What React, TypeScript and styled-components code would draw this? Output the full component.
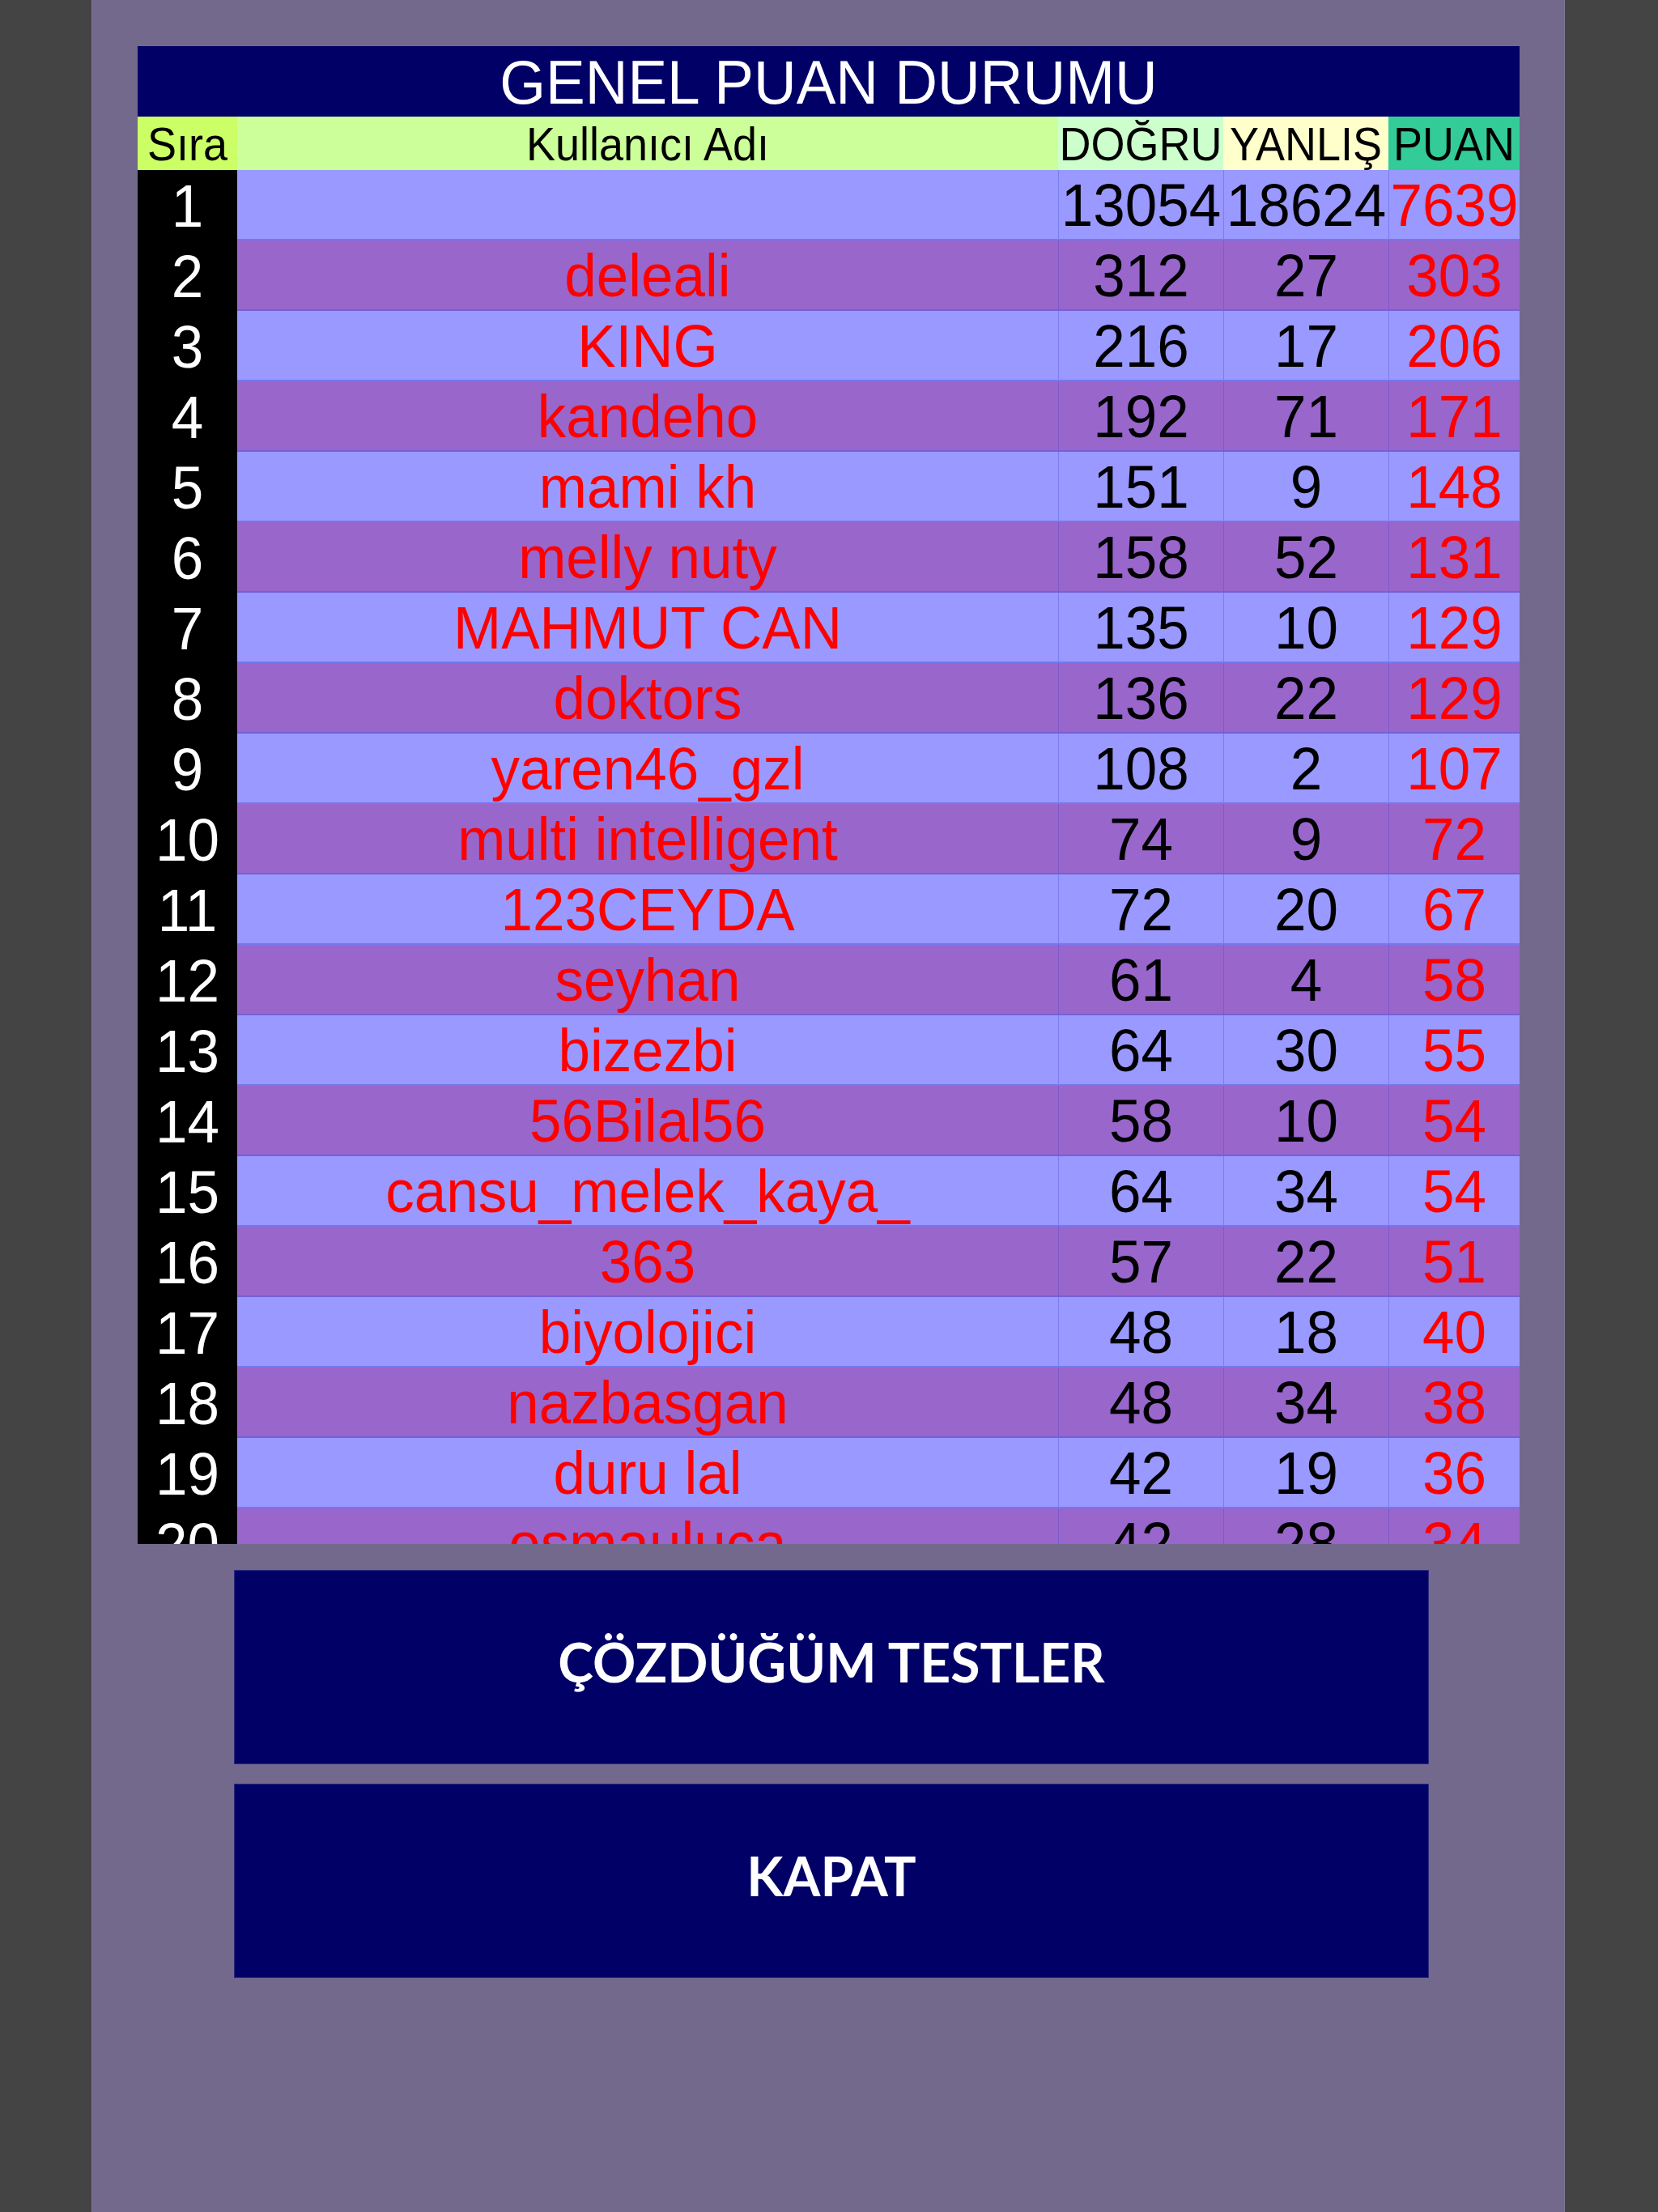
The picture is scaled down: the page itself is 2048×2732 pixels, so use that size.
import React from "react";
import styled, { createGlobalStyle } from "styled-components";

const GlobalStyle = createGlobalStyle`
  html, body {
    margin: 0;
    padding: 0;
    background: #444444;
  }
  * { box-sizing: border-box; }
`;

const Page = styled.div`
  width: 2048px;
  min-height: 2732px;
  display: flex;
  justify-content: center;
  background: #444444;
`;

const Panel = styled.main`
  width: 1820px;
  min-height: 2732px;
  margin-left: -2px;
  background: #73698d;
  border-left: 1px solid #7e7892;
  border-right: 1px solid #7e7892;
  padding: 57px 55px 0 56px;
  display: flex;
  flex-direction: column;
`;

const TableViewport = styled.section`
  width: 1707px;
  height: 1850px;
  overflow: hidden;
  font-family: "Liberation Sans", Arial, sans-serif;
`;

const Title = styled.div`
  height: 87px;
  background: #000066;
  color: #ffffff;
  font-size: 73px;
  display: flex;
  align-items: center;
  justify-content: center;
  line-height: 1;
  padding-top: 2px;
`;

const Grid = styled.div`
  display: grid;
  grid-template-columns: 123px 1014px 204px 204px 162px;
`;

const Tall = styled.span`
  display: inline-block;
  transform: scaleY(1.05);
`;

const HeaderCell = styled.div<{ $bg: string }>`
  height: 66px;
  background: ${(p) => p.$bg};
  color: #000000;
  font-size: 54px;
  line-height: 1;
  display: flex;
  align-items: center;
  justify-content: center;
  white-space: nowrap;
  overflow: visible;
  padding-top: 2px;
`;

const Cell = styled.div<{ $bg: string; $color: string; $divider?: boolean }>`
  height: 87px;
  background: ${(p) => p.$bg};
  color: ${(p) => p.$color};
  font-size: 71px;
  line-height: 1;
  display: flex;
  align-items: center;
  justify-content: center;
  white-space: nowrap;
  overflow: visible;
  border-bottom: 2px solid rgba(90, 90, 225, 0.55);
  border-left: ${(p) => (p.$divider ? "1px solid rgba(70, 70, 200, 0.35)" : "none")};
  padding-top: 2px;
`;

const RankCell = styled.div`
  height: 87px;
  background: #000000;
  color: #ffffff;
  font-size: 71px;
  line-height: 1;
  display: flex;
  align-items: center;
  justify-content: center;
  padding-top: 2px;
`;

const Buttons = styled.div`
  margin-top: 32px;
  margin-left: 119px;
  display: flex;
  flex-direction: column;
  gap: 24px;
`;

const Button = styled.button`
  width: 1476px;
  height: 240px;
  border: 1px solid #2a2a7a;
  background: #000066;
  color: #ffffff;
  font-family: Lato, "Open Sans", sans-serif;
  font-weight: 700;
  font-size: 66px;
  display: flex;
  align-items: center;
  justify-content: center;
  cursor: pointer;
  padding: 0 0 14px 0;
`;

type Row = { name: string; d: string; y: string; p: string };

const rows: Row[] = [
  { name: "", d: "13054", y: "18624", p: "7639" },
  { name: "deleali", d: "312", y: "27", p: "303" },
  { name: "KING", d: "216", y: "17", p: "206" },
  { name: "kandeho", d: "192", y: "71", p: "171" },
  { name: "mami kh", d: "151", y: "9", p: "148" },
  { name: "melly nuty", d: "158", y: "52", p: "131" },
  { name: "MAHMUT CAN", d: "135", y: "10", p: "129" },
  { name: "doktors", d: "136", y: "22", p: "129" },
  { name: "yaren46_gzl", d: "108", y: "2", p: "107" },
  { name: "multi intelligent", d: "74", y: "9", p: "72" },
  { name: "123CEYDA", d: "72", y: "20", p: "67" },
  { name: "seyhan", d: "61", y: "4", p: "58" },
  { name: "bizezbi", d: "64", y: "30", p: "55" },
  { name: "56Bilal56", d: "58", y: "10", p: "54" },
  { name: "cansu_melek_kaya_", d: "64", y: "34", p: "54" },
  { name: "363", d: "57", y: "22", p: "51" },
  { name: "biyolojici", d: "48", y: "18", p: "40" },
  { name: "nazbasgan", d: "48", y: "34", p: "38" },
  { name: "duru lal", d: "42", y: "19", p: "36" },
  { name: "osmauluca", d: "42", y: "28", p: "34" },
];

export default function App() {
  return (
    <>
      <GlobalStyle />
      <Page>
        <Panel>
          <TableViewport>
            <Title>
              <Tall>GENEL PUAN DURUMU</Tall>
            </Title>
            <Grid>
              <HeaderCell $bg="#ccff66"><Tall>Sıra</Tall></HeaderCell>
              <HeaderCell $bg="#ccff99"><Tall>Kullanıcı Adı</Tall></HeaderCell>
              <HeaderCell $bg="#ccffcc"><Tall>DOĞRU</Tall></HeaderCell>
              <HeaderCell $bg="#ffffcc"><Tall>YANLIŞ</Tall></HeaderCell>
              <HeaderCell $bg="#33cc99"><Tall>PUAN</Tall></HeaderCell>
              {rows.map((r, i) => {
                const bg = i % 2 === 0 ? "#9999ff" : "#9966cc";
                return (
                  <React.Fragment key={i}>
                    <RankCell><Tall>{i + 1}</Tall></RankCell>
                    <Cell $bg={bg} $color="#ff0000"><Tall>{r.name}</Tall></Cell>
                    <Cell $bg={bg} $color="#000000" $divider><Tall>{r.d}</Tall></Cell>
                    <Cell $bg={bg} $color="#000000" $divider><Tall>{r.y}</Tall></Cell>
                    <Cell $bg={bg} $color="#ff0000" $divider><Tall>{r.p}</Tall></Cell>
                  </React.Fragment>
                );
              })}
            </Grid>
          </TableViewport>
          <Buttons>
            <Button>ÇÖZDÜĞÜM TESTLER</Button>
            <Button>KAPAT</Button>
          </Buttons>
        </Panel>
      </Page>
    </>
  );
}
